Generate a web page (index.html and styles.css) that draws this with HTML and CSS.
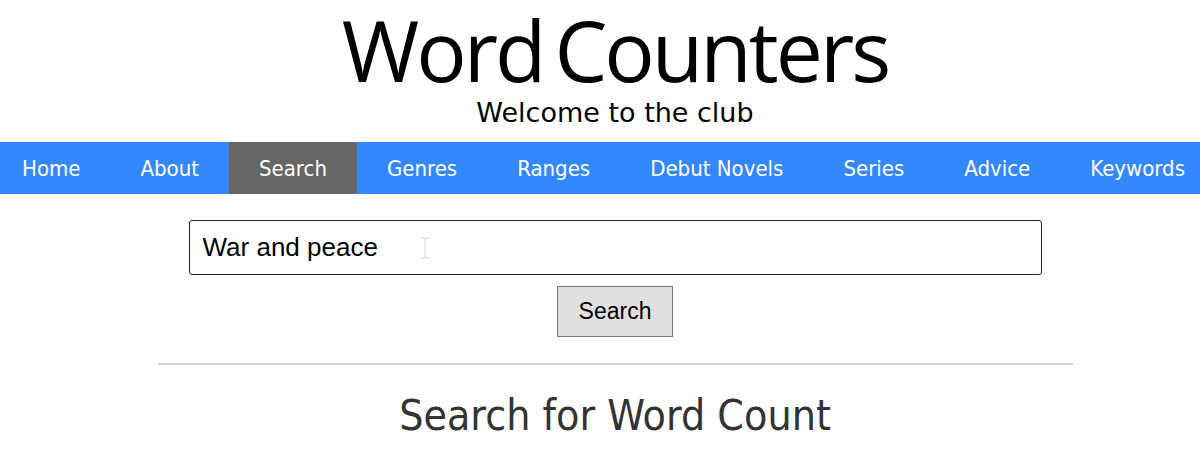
FILE: index.html
```html
<!DOCTYPE html>
<html>
<head>
    <title>Word Counters - Search</title>
    <link rel="stylesheet" href="styles.css">
</head>
<body>

    <header class="site-header">
        <div class="site-title">Word&thinsp;Counters</div>
        <div class="site-tagline">Welcome to the club</div>
    </header>

    <!-- main navigation, current page marked with .nav-active -->
    <nav class="nav-bar">
        <a class="nav-link nav-first" href="#">Home</a>
        <a class="nav-link" href="#">About</a>
        <a class="nav-link nav-active" href="#">Search</a>
        <a class="nav-link" href="#">Genres</a>
        <a class="nav-link" href="#">Ranges</a>
        <a class="nav-link" href="#">Debut Novels</a>
        <a class="nav-link" href="#">Series</a>
        <a class="nav-link" href="#">Advice</a>
        <a class="nav-link" href="#">Keywords</a>
    </nav>

    <main class="content">
        <form class="search-form" onsubmit="return false;">
            <div class="search-field">
                <input class="search-input" type="text" value="War and peace">
                <!-- mouse pointer that sits over the field in the screenshot -->
                <svg class="ibeam" width="10" height="22" viewBox="0 0 10 22">
                    <path d="M1 1h3l1 1 1-1h3M5 2v18M1 21h3l1-1 1 1h3" fill="none" stroke="#e4e4e4" stroke-width="1.5"/>
                </svg>
            </div>
            <button class="search-button" type="submit">Search</button>
        </form>

        <hr class="divider">

        <h1 class="page-heading">Search for Word Count</h1>
    </main>

</body>
</html>
```

FILE: styles.css
```css
body {
    margin: 0;
    padding: 0;
    background-color: #fff;
    font-family: "DejaVu Sans Condensed", "DejaVu Sans", sans-serif;
    overflow: hidden;
}

/** Header **/

.site-header {
    padding-left: 30px;
    text-align: center;
}

.site-title {
    font-family: "Open Sans", sans-serif;
    font-size: 84px;
    line-height: 99px;
    color: #000;
    letter-spacing: -3px;
}

.site-tagline {
    font-family: "DejaVu Sans", sans-serif;
    font-size: 27px;
    line-height: 28px;
    color: #000;
}

/** Navigation **/

.nav-bar {
    display: flex;
    height: 52px;
    margin-top: 15px;
    background-color: #3388ff;
}

.nav-link {
    display: flex;
    align-items: center;
    padding: 0 30px;
    color: #fff;
    font-size: 22px;
    text-decoration: none;
    white-space: nowrap;
}

.nav-first {
    padding-left: 22px;
}

.nav-active {
    background-color: #666;
}

/** Search **/

.content {
    padding-left: 30px;
    display: flex;
    flex-direction: column;
    align-items: center;
}

.search-form {
    display: flex;
    flex-direction: column;
    align-items: center;
    margin-top: 26px;
}

.search-field {
    position: relative;
}

.search-input {
    box-sizing: border-box;
    width: 853px;
    height: 55px;
    padding: 0 13px;
    border: 1px solid #222;
    border-radius: 3px;
    font-family: "Liberation Sans", Arial, sans-serif;
    font-size: 26px;
    color: #000;
    outline: none;
}

.ibeam {
    position: absolute;
    left: 231px;
    top: 17px;
}

.search-button {
    box-sizing: border-box;
    width: 116px;
    height: 51px;
    margin-top: 11px;
    border: 1px solid #777;
    border-radius: 0;
    background-color: #e0e0e0;
    font-family: "Liberation Sans", Arial, sans-serif;
    font-size: 23px;
    color: #000;
}

.divider {
    width: 915px;
    margin: 26px 0 0 0;
    border: none;
    border-top: 2px solid #d4d4d4;
}

.page-heading {
    margin: 26px 0 0 0;
    font-weight: normal;
    font-size: 42.5px;
    color: #333;
}
```
